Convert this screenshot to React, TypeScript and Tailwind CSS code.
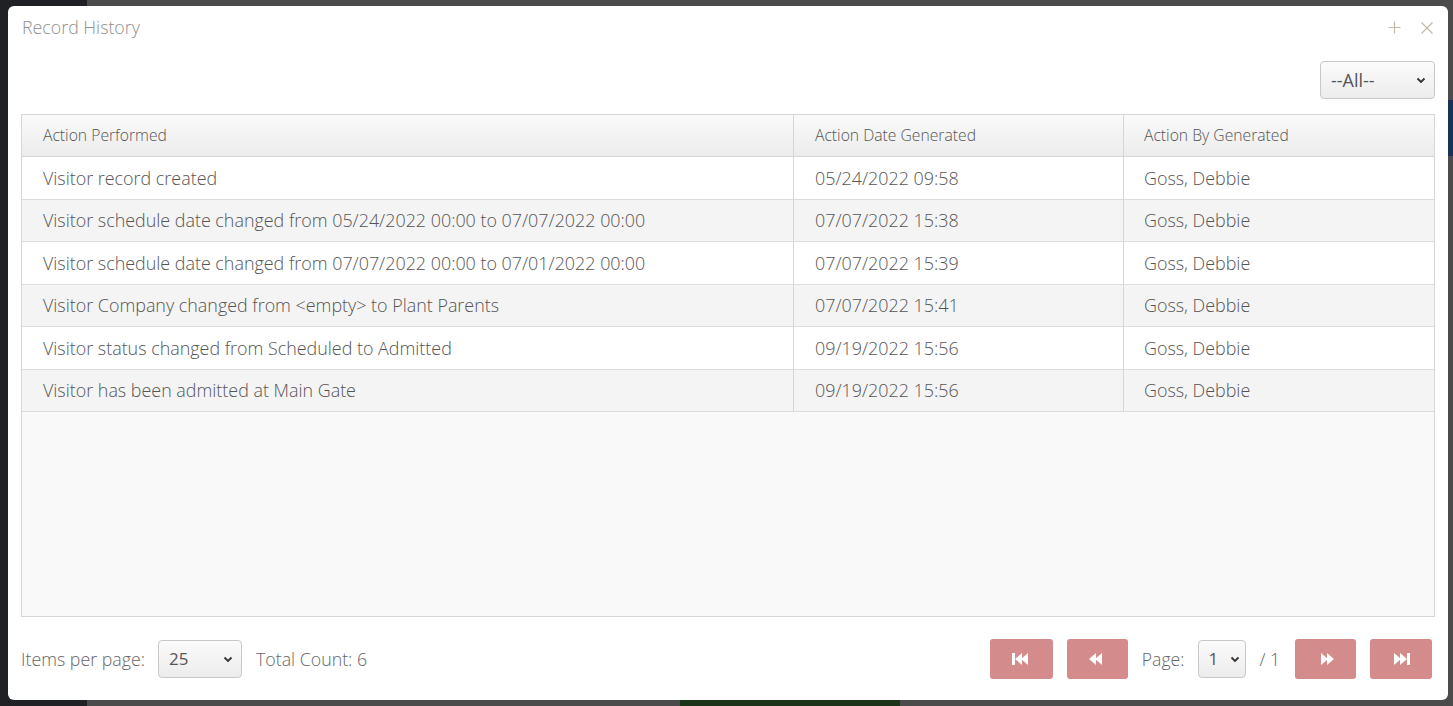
import React from 'react';

type Row = { action: string; date: string; by: string };

const rows: Row[] = [
  { action: 'Visitor record created', date: '05/24/2022 09:58', by: 'Goss, Debbie' },
  { action: 'Visitor schedule date changed from 05/24/2022 00:00 to 07/07/2022 00:00', date: '07/07/2022 15:38', by: 'Goss, Debbie' },
  { action: 'Visitor schedule date changed from 07/07/2022 00:00 to 07/01/2022 00:00', date: '07/07/2022 15:39', by: 'Goss, Debbie' },
  { action: 'Visitor Company changed from <empty> to Plant Parents', date: '07/07/2022 15:41', by: 'Goss, Debbie' },
  { action: 'Visitor status changed from Scheduled to Admitted', date: '09/19/2022 15:56', by: 'Goss, Debbie' },
  { action: 'Visitor has been admitted at Main Gate', date: '09/19/2022 15:56', by: 'Goss, Debbie' },
];

const Chevron = () => (
  <svg width="10" height="10" viewBox="0 0 10 10" className="shrink-0">
    <path d="M1.5 3.5 L5 7 L8.5 3.5" fill="none" stroke="#333" strokeWidth="1.8" />
  </svg>
);

const Select: React.FC<{ value: string; className: string; textClass?: string }> = ({ value, className, textClass = 'text-[18px]' }) => (
  <div
    className={`flex items-center justify-between rounded-[4px] border border-[#c8c8c8] bg-gradient-to-b from-[#fbfbfb] to-[#ececec] pl-[10px] pr-[8px] text-[#555] ${textClass} ${className}`}
  >
    <span>{value}</span>
    <Chevron />
  </div>
);

type IconKind = 'first' | 'prev' | 'next' | 'last';

const NavIcon: React.FC<{ kind: IconKind }> = ({ kind }) => {
  const flip = kind === 'next' || kind === 'last';
  const bar = kind === 'first' || kind === 'last';
  return (
    <svg width="20" height="14" viewBox="0 0 20 14" style={{ transform: flip ? 'scaleX(-1)' : undefined }}>
      {bar && <rect x="1" y="1" width="3" height="12" fill="#fff" />}
      <path d={bar ? 'M4 7 L11 1 L11 13 Z' : 'M2 7 L9 1 L9 13 Z'} fill="#fff" />
      <path d={bar ? 'M10 7 L17 1 L17 13 Z' : 'M8 7 L15 1 L15 13 Z'} fill="#fff" />
    </svg>
  );
};

const NavButton: React.FC<{ kind: IconKind; w: string }> = ({ kind, w }) => (
  <button className={`flex h-[40px] ${w} items-center justify-center rounded-[3px] bg-[#d38b8b]`}>
    <NavIcon kind={kind} />
  </button>
);

export default function App() {
  return (
    <div
      className="relative h-[706px] w-full overflow-hidden bg-[#4b4b4b]"
      style={{ fontFamily: '"Open Sans", "Liberation Sans", sans-serif' }}
    >
      <div className="absolute left-0 top-0 h-full w-[87px] bg-[#1f2124]" />
      <div className="absolute bottom-0 left-[680px] h-[8px] w-[220px] bg-[#1a3319]" />
      <div className="absolute left-[1448px] top-[100px] h-[56px] w-[5px] bg-[#173355]" />

      <div className="absolute left-[8px] top-[6px] flex h-[694px] w-[1440px] flex-col rounded-[6px] bg-white px-[13px]">
        <div className="flex h-[42px] items-center justify-between pl-[1px] pr-[2px] pt-[1px]">
          <span className="text-[17.8px] font-light text-[#8f8f8f]">Record History</span>
          <div className="flex items-center gap-[20px]">
            <svg width="13" height="13" viewBox="0 0 13 13">
              <path d="M6.5 0.5 V12.5 M0.5 6.5 H12.5" stroke="#c4b8a8" strokeWidth="1.2" />
            </svg>
            <svg width="12" height="12" viewBox="0 0 12 12">
              <path d="M0.5 0.5 L11.5 11.5 M11.5 0.5 L0.5 11.5" stroke="#c4b8a8" strokeWidth="1.2" />
            </svg>
          </div>
        </div>

        <div className="mt-[13px] flex justify-end">
          <Select value="--All--" className="h-[38px] w-[115px]" />
        </div>

        <div className="mt-[15px] h-[503px] border border-[#d6d6d6] bg-[#f9f9f9]">
          <div className="grid h-[42px] grid-cols-[771px_330px_1fr] border-b border-[#d6d6d6] bg-gradient-to-b from-[#fafafa] to-[#ececec] text-[15.7px] font-light text-[#555]">
            <div className="flex items-center pl-[21px]">Action Performed</div>
            <div className="flex items-center border-l border-[#d6d6d6] pl-[21px]">Action Date Generated</div>
            <div className="flex items-center border-l border-[#d6d6d6] pl-[20px]">Action By Generated</div>
          </div>
          {rows.map((r, i) => (
            <div
              key={i}
              className={`grid h-[42.5px] grid-cols-[771px_330px_1fr] border-b border-[#dcdcdc] text-[17.9px] font-light text-[#555] ${
                i % 2 === 0 ? 'bg-white' : 'bg-[#f4f4f4]'
              }`}
            >
              <div className="flex items-center pl-[21px] pt-[1px]">{r.action}</div>
              <div className="flex items-center border-l border-[#d6d6d6] pl-[21px] pt-[1px]">{r.date}</div>
              <div className="flex items-center border-l border-[#d6d6d6] pl-[20px] pt-[1px]">{r.by}</div>
            </div>
          ))}
        </div>

        <div className="mt-[22px] flex items-center justify-between">
          <div className="flex items-center text-[17.8px] font-light text-[#666]">
            <span>Items per page:</span>
            <Select value="25" className="ml-[13px] h-[38px] w-[84px]" textClass="text-[17px] font-normal" />
            <span className="ml-[14px]">Total Count: 6</span>
          </div>
          <div className="mr-[3px] flex items-center text-[17.6px] font-light text-[#666]">
            <NavButton kind="first" w="w-[63px]" />
            <div className="ml-[14px]">
              <NavButton kind="prev" w="w-[61px]" />
            </div>
            <span className="ml-[14px]">Page:</span>
            <Select value="1" className="ml-[14px] h-[38px] w-[48px] !pl-[9px] !pr-[5px]" textClass="text-[17px] font-normal" />
            <span className="ml-[13px]">/ 1</span>
            <div className="ml-[15px]">
              <NavButton kind="next" w="w-[61px]" />
            </div>
            <div className="ml-[14px]">
              <NavButton kind="last" w="w-[62px]" />
            </div>
          </div>
        </div>
      </div>
    </div>
  );
}
